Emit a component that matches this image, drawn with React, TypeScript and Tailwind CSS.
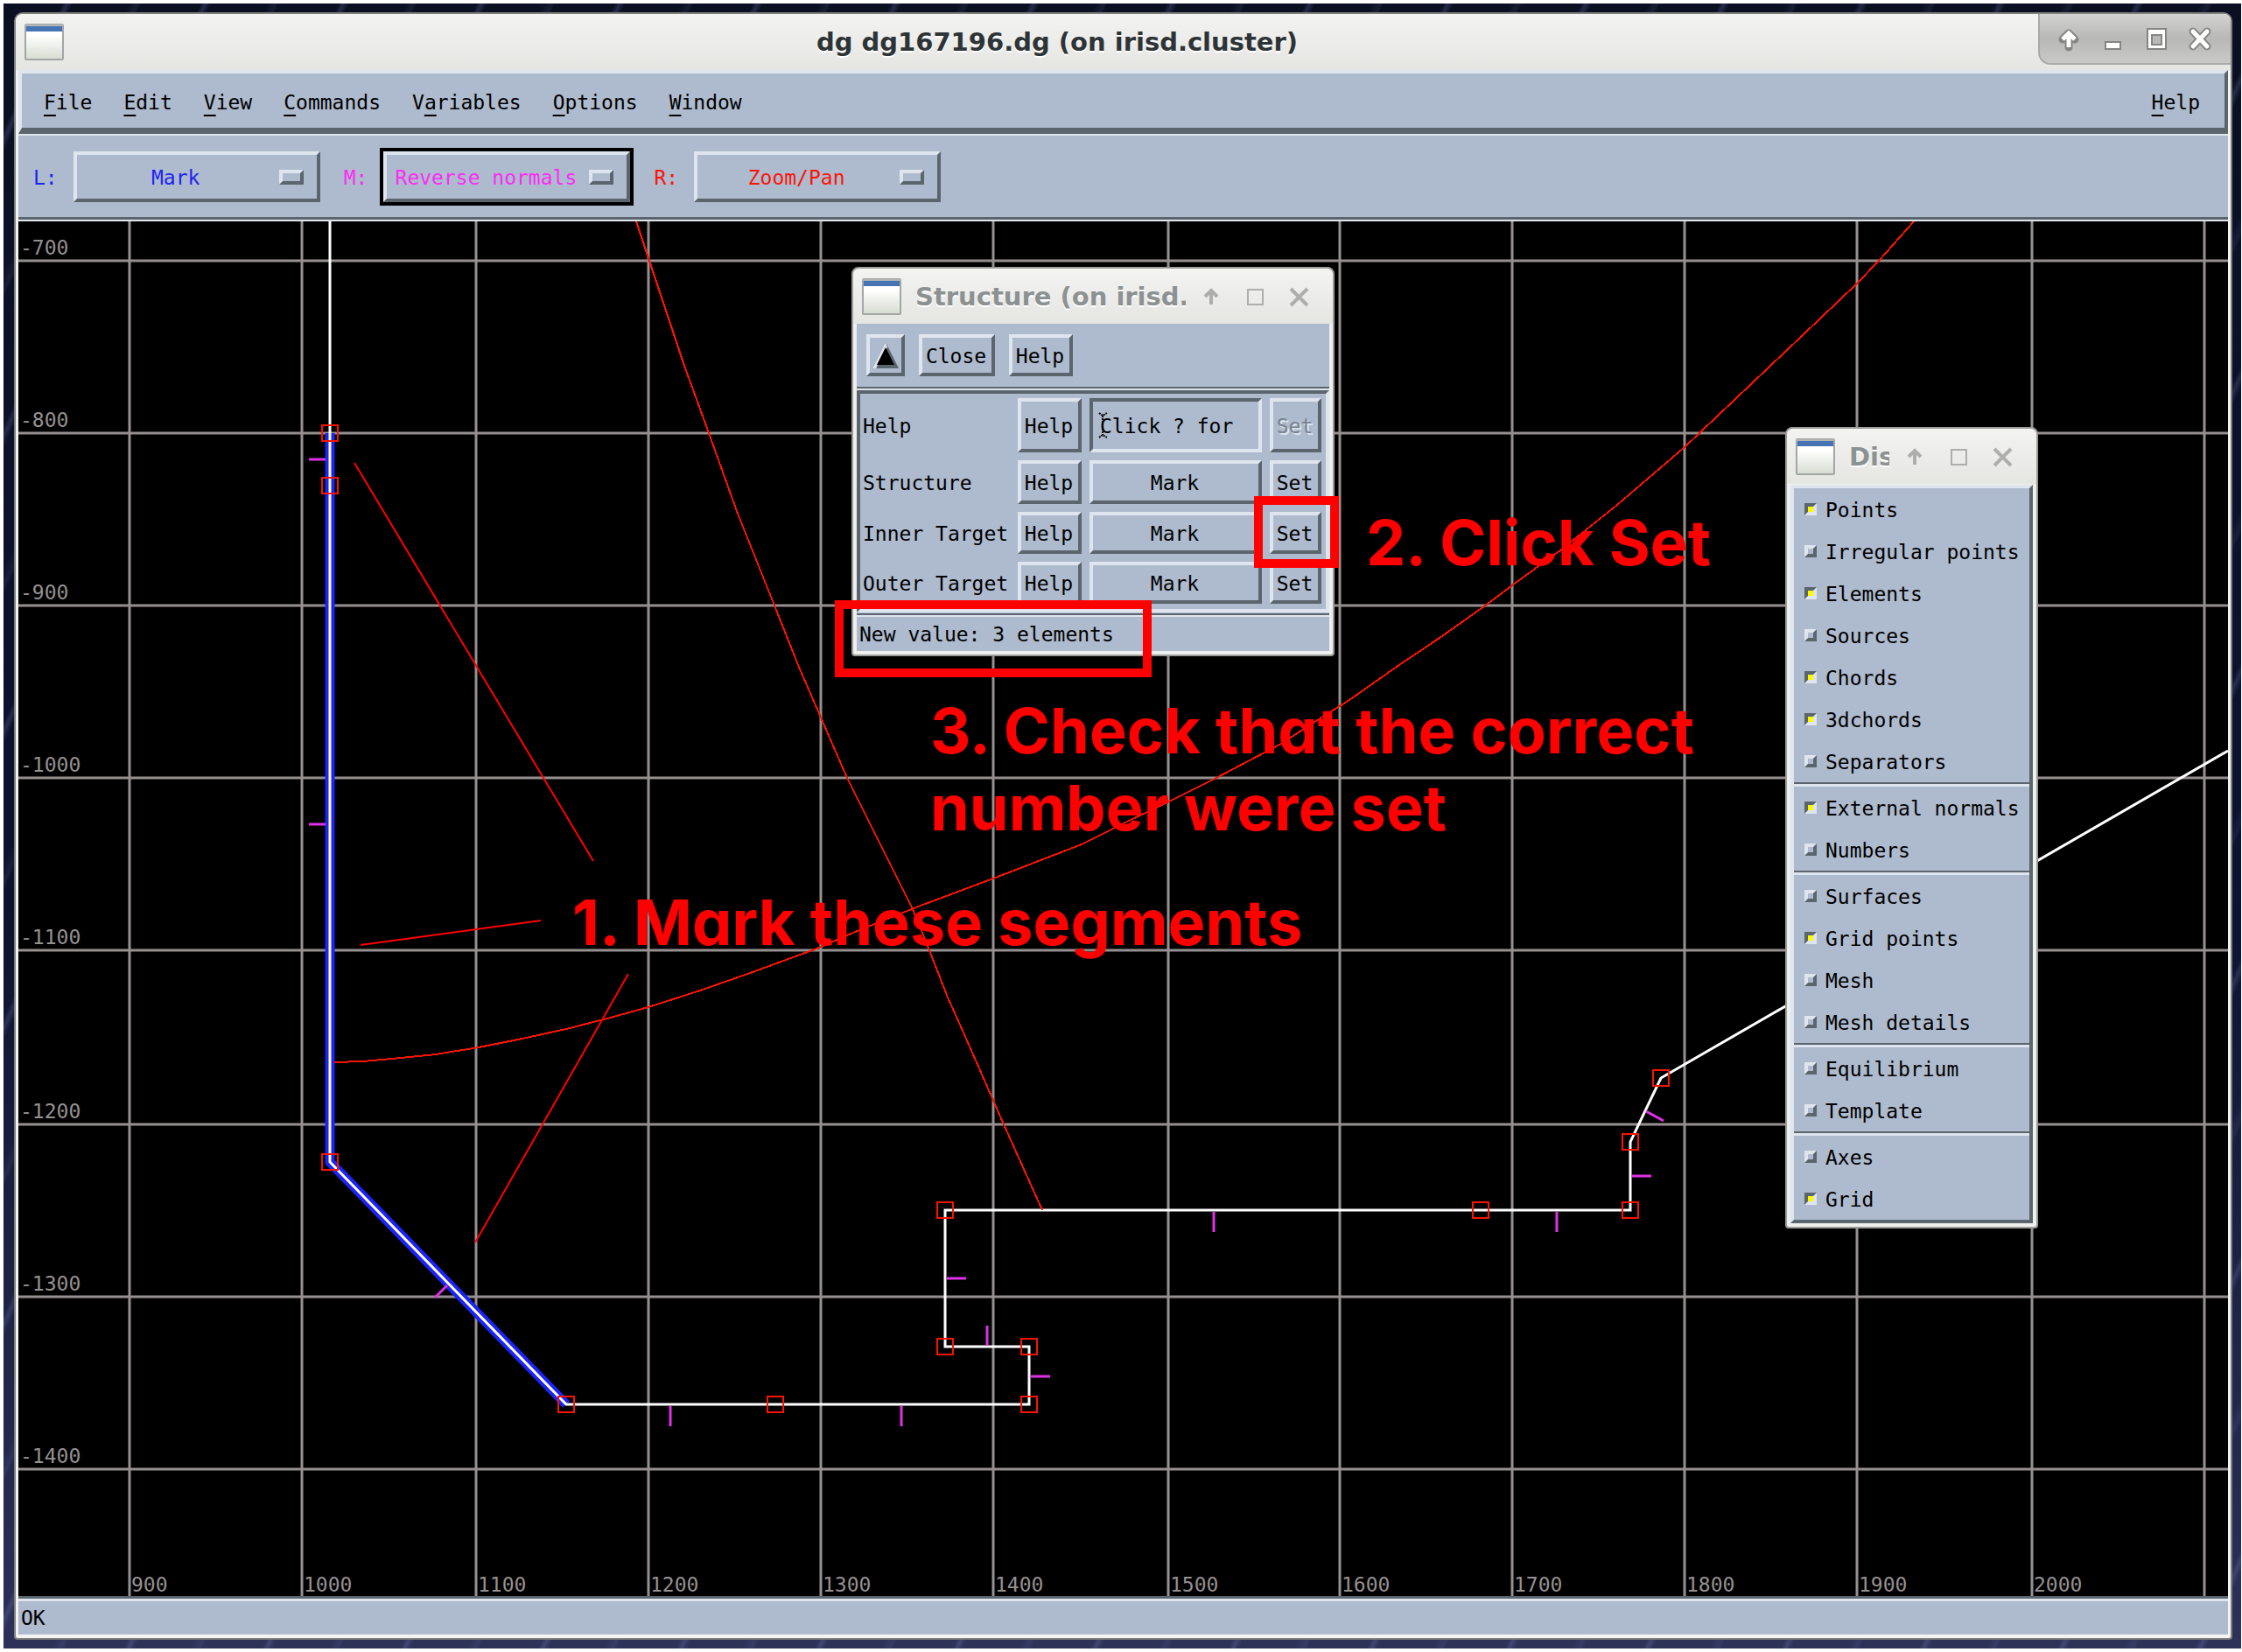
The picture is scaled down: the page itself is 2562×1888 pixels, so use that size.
import React from "react";

const MONO = "font-['DejaVu_Sans_Mono',monospace] text-[23px] leading-[28px]";
const RAISED =
  "border-4 border-t-[#dfe5ef] border-l-[#dfe5ef] border-b-[#5b656e] border-r-[#5b656e] bg-[#aebacd]";
const SUNKEN =
  "border-4 border-t-[#5b656e] border-l-[#5b656e] border-b-[#dfe5ef] border-r-[#dfe5ef] bg-[#aebacd]";
const BUTTON = `pt-[2px] pr-[2px] ${RAISED}`;

const GRID_X: [number, string][] = [
  [148, "900"],
  [345, "1000"],
  [544, "1100"],
  [741, "1200"],
  [938, "1300"],
  [1135, "1400"],
  [1335, "1500"],
  [1531, "1600"],
  [1728, "1700"],
  [1925, "1800"],
  [2122, "1900"],
  [2322, "2000"],
  [2519, ""],
];
const GRID_Y: [number, string][] = [
  [298, "-700"],
  [495, "-800"],
  [692, "-900"],
  [889, "-1000"],
  [1086, "-1100"],
  [1285, "-1200"],
  [1482, "-1300"],
  [1679, "-1400"],
];
const POINTS: [number, number][] = [
  [377, 495],
  [377, 555],
  [377, 1328],
  [647, 1605],
  [886, 1605],
  [1176, 1605],
  [1176, 1539],
  [1080, 1539],
  [1080, 1383],
  [1692, 1383],
  [1863, 1383],
  [1863, 1305],
  [1898, 1232],
];
const NORMALS: [number, number, number, number][] = [
  [353, 525, 372, 525],
  [353, 942, 372, 942],
  [497, 1483, 511, 1469],
  [766, 1607, 766, 1630],
  [1030, 1607, 1030, 1630],
  [1128, 1515, 1128, 1538],
  [1082, 1461, 1104, 1461],
  [1178, 1573, 1200, 1573],
  [1387, 1385, 1387, 1408],
  [1779, 1385, 1779, 1408],
  [1865, 1344, 1887, 1344],
  [1881, 1270, 1901, 1281],
];

function Plot() {
  return (
    <svg viewBox="21 253 2525 1571" className="block h-auto w-full bg-black" role="img" aria-label="Divertor geometry plot">
      <g stroke="#969090" strokeWidth="3">
        {GRID_X.map(([x]) => (
          <line key={x} x1={x} x2={x} y1={253} y2={1824} />
        ))}
        {GRID_Y.map(([y]) => (
          <line key={y} x1={21} x2={2546} y1={y} y2={y} />
        ))}
      </g>
      <g fill="#969090" className={MONO}>
        {GRID_X.map(([x, label]) => (
          <text key={x} x={x + 2} y={1819}>{label}</text>
        ))}
        {GRID_Y.map(([y, label]) => (
          <text key={y} x={23} y={y - 7}>{label}</text>
        ))}
      </g>
      <path d="M377 495V1328L647 1605" fill="none" stroke="#1c24f5" strokeWidth="11" />
      <path
        d="M377 253V1328L647 1605H1176V1539H1080V1383H1863V1305L1898 1232L2546 858"
        fill="none"
        stroke="#ffffff"
        strokeWidth="3"
      />
      <g fill="none" stroke="#f81400" strokeWidth="2" shapeRendering="crispEdges">
        <path d="M727 253L742 298L782 418L810 495L843 587L885 692L912 760L938 820L968 889L1010 973L1042 1037L1062 1086L1083 1140L1101 1180L1147 1285L1191 1383" />
        <path d="M382 1214L415 1213L448 1210L498 1205L547 1197L597 1187L647 1176L694 1164L741 1151L800 1132L860 1111L931 1085L982 1063L1052 1035L1135 1004L1236 965L1290 938L1334 917L1390 889L1464 850L1504 824L1542 800L1596 762L1645 729L1696 693L1728 669L1783 629L1848 577L1925 511L1943 494L2021 420L2080 364L2122 324L2147 298L2187 253" />
      </g>
      <g stroke="#e030e8" strokeWidth="3">
        {NORMALS.map(([x1, y1, x2, y2]) => (
          <line key={`${x1}-${y1}`} x1={x1} y1={y1} x2={x2} y2={y2} />
        ))}
      </g>
      <g fill="none" stroke="#f81400" strokeWidth="2">
        {POINTS.map(([x, y]) => (
          <rect key={`${x}-${y}`} x={x - 9} y={y - 9} width="18" height="18" />
        ))}
      </g>
      <path d="M405 529L678 984M412 1080L618 1052M718 1113L543 1420" stroke="#ff0000" strokeWidth="2" />
    </svg>
  );
}

function WindowIcon() {
  return (
    <svg width="45" height="42" viewBox="0 0 45 42" className="shrink-0" aria-hidden="true">
      <defs>
        <linearGradient id="pane" x1="0" y1="0" x2="0" y2="1">
          <stop offset="0.3" stopColor="#ffffff" />
          <stop offset="1" stopColor="#d6dcd1" />
        </linearGradient>
      </defs>
      <rect x="1" y="1" width="43" height="40" rx="1" fill="url(#pane)" stroke="#a3a6a4" strokeWidth="2" />
      <rect x="1" y="1" width="43" height="2" fill="#b4b7b4" />
      <rect x="2" y="3" width="41" height="6" fill="#4674b4" />
    </svg>
  );
}

function ArrowGlyph() {
  return <path d="M0 9V-7M-7 0L0 -7L7 0" fill="none" />;
}

function MainControls() {
  return (
    <div className="flex h-[58px] w-[220px] shrink-0 items-center gap-[10px] self-start rounded-tr-[8px] rounded-bl-[14px] border-b-2 border-l-2 border-[#a9a9a7] bg-linear-to-b from-[#d2d2d1] via-[#b8b8b6] to-[#c9c9c8] pt-[2px] pl-[13px]">
      <button aria-label="Shade" className="h-10 w-10">
        <svg viewBox="-20 -20 40 40">
          <g stroke="#858583" strokeWidth="9" strokeLinejoin="round" strokeLinecap="round"><ArrowGlyph /></g>
          <g stroke="#ffffff" strokeWidth="5"><ArrowGlyph /></g>
        </svg>
      </button>
      <button aria-label="Minimize" className="h-10 w-10">
        <svg viewBox="-20 -20 40 40">
          <rect x="-8" y="3" width="17" height="8" fill="#fff" stroke="#858583" strokeWidth="2" />
        </svg>
      </button>
      <button aria-label="Maximize" className="h-10 w-10">
        <svg viewBox="-20 -20 40 40">
          <path d="M-10 -12H11V11H-10ZM-5 -5V6H6V-5Z" fill="#fff" fillRule="evenodd" stroke="#858583" strokeWidth="2" />
        </svg>
      </button>
      <button aria-label="Close" className="h-10 w-10">
        <svg viewBox="-20 -20 40 40">
          <path d="M-8 -9L8 8M8 -9L-8 8" stroke="#858583" strokeWidth="9" strokeLinecap="round" />
          <path d="M-8 -9L8 8M8 -9L-8 8" stroke="#fff" strokeWidth="5" strokeLinecap="round" />
        </svg>
      </button>
    </div>
  );
}

function DialogTitle({ children }: { children: string }) {
  return (
    <header className="flex h-[63px] items-center rounded-t-[8px] bg-linear-to-b from-[#f3f3f2] to-[#e5e5e2] pr-[19px] pl-[10px]">
      <WindowIcon />
      <h2 className="ml-4 min-w-0 flex-1 overflow-hidden font-['DejaVu_Sans',sans-serif] text-[29px] leading-[36px] font-bold whitespace-nowrap text-[#8c9191] [text-shadow:0_2px_0_#ffffff]">
        {children}
      </h2>
      <div className="ml-[9px] flex gap-[10px] stroke-[#aeaeac]">
        <button aria-label="Shade" className="h-10 w-10">
          <svg viewBox="-20 -20 40 40" strokeWidth="4"><ArrowGlyph /></svg>
        </button>
        <button aria-label="Maximize" className="h-10 w-10">
          <svg viewBox="-20 -20 40 40"><rect x="-8" y="-8" width="17" height="17" fill="none" strokeWidth="2" /></svg>
        </button>
        <button aria-label="Close" className="h-10 w-10">
          <svg viewBox="-20 -20 40 40"><path d="M-9 -9L10 10M10 -9L-9 10" strokeWidth="4" /></svg>
        </button>
      </div>
    </header>
  );
}

const MENUS = [
  ["", "F", "ile"],
  ["", "E", "dit"],
  ["", "V", "iew"],
  ["", "C", "ommands"],
  ["V", "a", "riables"],
  ["", "O", "ptions"],
  ["", "W", "indow"],
];

function MenuButton({ parts }: { parts: string[] }) {
  return (
    <button>
      {parts[0]}
      <span className="underline decoration-2 underline-offset-[6px]">{parts[1]}</span>
      {parts[2]}
    </button>
  );
}

function MouseOption({ id, label, value, tone, focused }: { id: string; label: string; value: string; tone: string; focused?: boolean }) {
  return (
    <div className={`flex items-center gap-[14px] ${tone}`}>
      <label htmlFor={id} className="pt-[2px]">{label}</label>
      <div className={`border-4 ${focused ? "border-black" : "border-transparent"}`}>
        <div className={`relative w-[282px] ${RAISED}`}>
          <select id={id} defaultValue={value} className="block h-[50px] w-full appearance-none pt-[2px] pr-[48px] text-center outline-none">
            <option>{value}</option>
          </select>
          <span className={`pointer-events-none absolute top-[17px] right-[15px] h-[17px] w-7 ${RAISED}`} />
        </div>
      </div>
    </div>
  );
}

const ROWS = ["Structure", "Inner Target", "Outer Target"];

function StructureDialog() {
  return (
    <section className="absolute top-[52px] left-[952px] w-[552px] rounded-t-[8px] rounded-b-[4px] border-2 border-[#9c9c9a] bg-[#efefed]">
      <DialogTitle>Structure (on irisd.</DialogTitle>
      <div className="mx-1 mb-1 bg-[#aebacd] text-black">
        <div className="flex gap-4 border-b-2 border-[#5b656e] px-[11px] py-3">
          <button aria-label="Raise" className={`flex h-12 w-11 items-center justify-center ${RAISED}`}>
            <svg width="30" height="30" viewBox="0 0 30 30">
              <path d="M15 0L30 30H0Z" fill="#5b656e" />
              <path d="M15 0L0 30L4 30L17 6Z" fill="#dfe5ef" />
              <path d="M15 6L25 26H5Z" fill="#000" />
            </svg>
          </button>
          <button className={`h-12 w-[87px] ${BUTTON}`}>Close</button>
          <button className={`h-12 w-[73px] ${BUTTON}`}>Help</button>
        </div>
        <div className="border-t-2 border-[#dfe5ef]" />
        <div className={`grid grid-cols-[1fr_73px_197px_59px] grid-rows-[62px_50px_48px_48px] items-stretch gap-[9px] pt-[5px] pr-[5px] pb-[6px] pl-[3px] ${SUNKEN}`}>
          <label htmlFor="help-field" className="self-center pt-[2px]">Help</label>
          <button className={BUTTON}>Help</button>
          <div className="relative">
            <input id="help-field" readOnly value="Click ? for" className={`h-full w-full pt-[2px] pl-2 outline-none ${SUNKEN}`} />
            <svg className="pointer-events-none absolute top-4 left-[10px]" width="12" height="30" viewBox="0 0 12 30" aria-hidden="true">
              <path d="M1 1L5 4L10 1M1 29L5 26L10 29M5 4V26" fill="none" stroke="#000" strokeWidth="2" strokeDasharray="2 1" />
            </svg>
          </div>
          <button disabled className={`text-[#78838f] [text-shadow:2px_2px_0_#dfe5ef] ${BUTTON}`}>Set</button>
          {ROWS.map((row) => (
            <React.Fragment key={row}>
              <span className="self-center pt-[2px] whitespace-nowrap">{row}</span>
              <button className={BUTTON}>Help</button>
              <button className={BUTTON}>Mark</button>
              <button className={BUTTON}>Set</button>
            </React.Fragment>
          ))}
        </div>
        <div className="mt-px border-b-2 border-[#5b656e]" />
        <p className="border-t-2 border-[#dfe5ef] px-[3px] pt-[6px] pb-[5px]">New value: 3 elements</p>
      </div>
    </section>
  );
}

const DISPLAY: [string, boolean][][] = [
  [
    ["Points", true],
    ["Irregular points", false],
    ["Elements", true],
    ["Sources", false],
    ["Chords", true],
    ["3dchords", true],
    ["Separators", false],
  ],
  [
    ["External normals", true],
    ["Numbers", false],
  ],
  [
    ["Surfaces", false],
    ["Grid points", true],
    ["Mesh", false],
    ["Mesh details", false],
  ],
  [
    ["Equilibrium", false],
    ["Template", false],
  ],
  [
    ["Axes", false],
    ["Grid", true],
  ],
];

function DisplayDialog() {
  return (
    <section className="absolute top-[235px] left-[2019px] w-[289px] rounded-t-[8px] rounded-b-[4px] border-2 border-[#9c9c9a] bg-[#efefed]">
      <DialogTitle>Dis</DialogTitle>
      <div className={`mx-1 mt-px mb-1 text-black ${RAISED}`}>
        {DISPLAY.map((group, i) => (
          <div key={group[0][0]}>
            {i > 0 && <div className="h-[5px] border-t-2 border-b-[3px] border-t-[#5b656e] border-b-[#dfe5ef]" />}
            {group.map(([label, on]) => (
              <label key={label} className="flex h-12 items-center gap-[10px] pl-3 whitespace-nowrap">
                <input
                  type="checkbox"
                  defaultChecked={on}
                  className="h-[14px] w-[14px] shrink-0 appearance-none border-4 border-t-[#dfe5ef] border-r-[#5b656e] border-b-[#5b656e] border-l-[#dfe5ef] bg-[#aebacd] checked:border-t-[#5b656e] checked:border-r-[#dfe5ef] checked:border-b-[#dfe5ef] checked:border-l-[#5b656e] checked:bg-[#fdf900]"
                />
                <span className="pt-[2px]">{label}</span>
              </label>
            ))}
          </div>
        ))}
      </div>
    </section>
  );
}

const NOTE =
  "absolute whitespace-nowrap font-['Inter',sans-serif] text-[72px] leading-[88px] font-bold text-[#ff0000] [font-feature-settings:'cv11']";

export default function App() {
  return (
    <div className="bg-white pt-1 pr-px pb-1 pl-1">
      <div className="bg-[repeating-linear-gradient(115deg,transparent_0px,transparent_61px,#8f9ad833_66px,transparent_72px,transparent_130px,#8f9ad81a_139px,transparent_143px),linear-gradient(180deg,#0a1022,#0c1330_55%,#2c3258)] pt-[10px] pr-[10px] pb-[10px] pl-3">
        <main className={`rounded-t-[10px] rounded-b-[4px] border-2 border-[#80807e] bg-[#f3f3f1] text-black ${MONO}`}>
          <header className="flex h-16 items-center rounded-t-[8px] bg-linear-to-b from-[#f3f3f2] to-[#e5e5e2] pl-[10px]">
            <WindowIcon />
            <h1 className="flex-1 pl-[14px] text-center font-['DejaVu_Sans',sans-serif] text-[29px] leading-[36px] font-bold text-[#2e3436] [text-shadow:0_2px_0_#ffffff]">
              dg dg167196.dg (on irisd.cluster)
            </h1>
            <MainControls />
          </header>
          <div className="mx-[3px] mb-1 bg-[#aebacd]">
            <nav className={`flex h-[73px] items-center gap-9 border-b-[7px] pt-[3px] pr-[28px] pl-[25px] ${RAISED}`}>
              {MENUS.map((parts) => (
                <MenuButton key={parts.join("")} parts={parts} />
              ))}
              <span className="flex-1" />
              <MenuButton parts={["", "H", "elp"]} />
            </nav>
            <div className="flex gap-[23px] border-t-2 border-b-[3px] border-t-[#dfe5ef] border-b-[#5b656e] pt-[14px] pb-[13px] pl-[17px]">
              <MouseOption id="left" label="L:" value="Mark" tone="text-[#1c24f5]" />
              <MouseOption id="middle" label="M:" value="Reverse normals" tone="text-[#fb2cf5]" focused />
              <MouseOption id="right" label="R:" value="Zoom/Pan" tone="text-[#fb1408]" />
            </div>
            <div className="relative border-t-2 border-[#dfe5ef]">
              <Plot />
              <StructureDialog />
              <DisplayDialog />
              <div className="pointer-events-none absolute top-[314px] left-[1412px] h-[82px] w-[97px] border-10 border-[#ff0000]" />
              <div className="pointer-events-none absolute top-[433px] left-[933px] h-[88px] w-[362px] border-10 border-[#ff0000]" />
              <p className={`top-[323px] left-[1540px] ${NOTE}`}>2. Click Set</p>
              <p className={`top-[538px] left-[1042px] ${NOTE}`}>
                3. Check that the correct
                <br />
                number were set
              </p>
              <p className={`top-[757px] left-[633px] ${NOTE}`}>1. Mark these segments</p>
            </div>
            <p className="border-t-[3px] border-[#5b656e]">
              <span className="block border-t-[3px] border-[#dfe5ef] px-[3px] py-[5px]">OK</span>
            </p>
          </div>
        </main>
      </div>
    </div>
  );
}
